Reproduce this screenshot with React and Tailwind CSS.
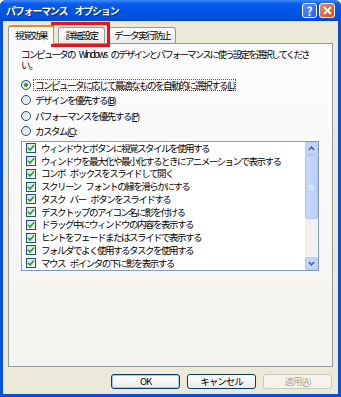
import React from "react";

const font = { fontFamily: '"Noto Sans CJK JP", "Noto Sans", sans-serif' };

const radios = [
  { label: "コンピュータに応じて最適なものを自動的に選択する", key: "L", checked: true },
  { label: "デザインを優先する", key: "B" },
  { label: "パフォーマンスを優先する", key: "P" },
  { label: "カスタム", key: "C", colon: true },
];

const items = [
  "ウィンドウとボタンに視覚スタイルを使用する",
  "ウィンドウを最大化や最小化するときにアニメーションで表示する",
  "コンボ ボックスをスライドして開く",
  "スクリーン フォントの縁を滑らかにする",
  "タスク バー ボタンをスライドする",
  "デスクトップのアイコン名に影を付ける",
  "ドラッグ中にウィンドウの内容を表示する",
  "ヒントをフェードまたはスライドで表示する",
  "フォルダでよく使用するタスクを使用する",
  "マウス ポインタの下に影を表示する",
];

function Radio({ checked }) {
  return (
    <span className="w-[10px] h-[10px] rounded-full border border-[#1C5180] bg-[linear-gradient(135deg,#DCDBD3,#FFFFFF)] flex items-center justify-center shrink-0">
      {checked && <span className="w-[4px] h-[4px] rounded-full bg-[#21A121]" />}
    </span>
  );
}

function Check() {
  return (
    <span className="w-[10px] h-[10px] border border-[#1C5180] bg-[linear-gradient(135deg,#DCDBD3,#FFFFFF)] flex items-center justify-center shrink-0">
      <svg width="8" height="8" viewBox="0 0 8 8">
        <path d="M1 3.8 L3 6 L7 1.5" fill="none" stroke="#21A121" strokeWidth="1.7" />
      </svg>
    </span>
  );
}

function Arrow({ up }) {
  return (
    <svg width="7" height="5" viewBox="0 0 7 5">
      <path d={up ? "M0.8 4 L3.5 1.2 L6.2 4" : "M0.8 1 L3.5 3.8 L6.2 1"} fill="none" stroke="#4D6185" strokeWidth="1.5" />
    </svg>
  );
}

function Scrollbar() {
  return (
    <div className="w-[13px] flex flex-col bg-[#F3F1EC] shrink-0">
      <div className="h-[13px] rounded-[2px] border border-[#B4C8F6] bg-[#C4D5FB] flex items-center justify-center">
        <Arrow up />
      </div>
      <div className="h-[64px] rounded-[2px] border border-[#B0C3F2] bg-[linear-gradient(90deg,#C8D8FC,#BED0FA)] flex flex-col items-center justify-center gap-[1px]">
        <span className="w-[5px] h-px bg-[#EEF4FE]" />
        <span className="w-[5px] h-px bg-[#EEF4FE]" />
        <span className="w-[5px] h-px bg-[#EEF4FE]" />
      </div>
      <div className="flex-1" />
      <div className="h-[13px] rounded-[2px] border border-[#B4C8F6] bg-[#C4D5FB] flex items-center justify-center">
        <Arrow />
      </div>
    </div>
  );
}

function Button({ children, disabled, primary }) {
  return (
    <div
      className={`w-[69px] h-[15px] rounded-[3px] border flex items-center justify-center ${
        disabled
          ? "border-[#C9C7BA] bg-[#F5F4EA] text-[#ACA899]"
          : primary
          ? "border-[#003C74] bg-[linear-gradient(#FFFFFF,#ECEBE6)] shadow-[inset_0_0_0_1px_#A9C6F2] text-black"
          : "border-[#003C74] bg-[linear-gradient(#FFFFFF,#ECEBE6)] text-black"
      }`}
    >
      {children}
    </div>
  );
}

export default function App() {
  return (
    <div
      style={font}
      className="w-[341px] h-[397px] flex flex-col bg-[#0A4FDC] rounded-t-[6px] overflow-hidden text-[9.5px] tracking-[-1.5px] [word-spacing:4px] leading-[11px] text-black"
    >
      {/* title bar */}
      <div className="h-[21px] flex items-center justify-between pl-[6px] pr-[6px] bg-[linear-gradient(#3D8BF8_0%,#0A5CEB_18%,#0055E5_50%,#0052E0_85%,#0044CC_100%)]">
        <span className="text-white font-bold text-[10px] tracking-[-1.2px] [word-spacing:6px] [text-shadow:1px_1px_0_#0A1E8A]">
          パフォーマンス オプション
        </span>
        <div className="flex gap-[2px]">
          <div className="w-[15px] h-[15px] rounded-[3px] border border-white bg-[linear-gradient(135deg,#5A8FF4,#2560E6)] flex items-center justify-center text-white font-bold text-[12px] tracking-normal leading-none">
            ?
          </div>
          <div className="w-[16px] h-[15px] rounded-[3px] border border-white bg-[linear-gradient(135deg,#EC8A67,#D9481E)] flex items-center justify-center">
            <svg width="9" height="9" viewBox="0 0 9 9">
              <path d="M1 1 L8 8 M8 1 L1 8" stroke="white" strokeWidth="1.8" />
            </svg>
          </div>
        </div>
      </div>

      {/* body */}
      <div className="flex-1 mx-[3px] mb-[3px] bg-[#ECE9D8] flex flex-col">
        {/* tabs */}
        <div className="h-[22px] flex items-end pl-[5px] relative">
          <div className="h-[19px] w-[46px] -mb-px z-10 border border-b-0 border-[#919B9C] border-t-[#E68B2C] border-t-2 rounded-t-[3px] bg-[#FCFCFE] flex items-center justify-center pb-[1px]">
            視覚効果
          </div>
          <div className="relative h-[16px] w-[47px] ml-[4px] border border-[#919B9C] border-b-0 rounded-t-[3px] bg-[linear-gradient(#FFFFFF,#ECEBE6)] flex items-center justify-center">
            詳細設定
            <div className="absolute -left-[8px] -right-[6px] -top-[6px] -bottom-[4px] border-[3px] border-[#E8141B]" />
          </div>
          <div className="h-[16px] w-[68px] ml-[3px] border border-[#919B9C] border-b-0 rounded-t-[3px] bg-[linear-gradient(#FFFFFF,#ECEBE6)] flex items-center justify-center">
            データ実行防止
          </div>
        </div>

        {/* panel */}
        <div className="mx-[5px] h-[324px] border border-[#919B9C] bg-[linear-gradient(#FCFCFE,#F4F3EE)] pl-[12px] pt-[5px] flex flex-col">
          <div className="whitespace-nowrap h-[11px] tracking-[-1.85px]">
            コンピュータの Windows のデザインとパフォーマンスに使う設定を選択してくださ
          </div>
          <div className="h-[11px]">い。</div>

          <div className="mt-[6px] flex flex-col">
            {radios.map((r, i) => (
              <div key={i} className="h-[15.5px] flex items-center gap-[2px]">
                <Radio checked={r.checked} />
                <span
                  className={`px-px leading-[10px] border border-dotted ${
                    i === 0 ? "border-[#555]" : "border-transparent"
                  }`}
                >
                  {r.label}(<span className="underline">{r.key}</span>){r.colon ? ":" : ""}
                </span>
              </div>
            ))}
          </div>

          <div className="mt-[2px] w-[298px] h-[130px] border border-[#7F9DB9] bg-white flex">
            <div className="flex-1 flex flex-col pl-[4px]">
              {items.map((t, i) => (
                <div key={i} className="h-[12.75px] flex items-center gap-[5px] whitespace-nowrap">
                  <Check />
                  <span>{t}</span>
                </div>
              ))}
            </div>
            <Scrollbar />
          </div>
        </div>

        {/* buttons */}
        <div className="flex justify-end gap-[7px] pr-[6px] mt-[7px] tracking-[-1px]">
          <Button primary>OK</Button>
          <Button>キャンセル</Button>
          <Button disabled>
            適用(<span className="underline">A</span>)
          </Button>
        </div>
      </div>
    </div>
  );
}
